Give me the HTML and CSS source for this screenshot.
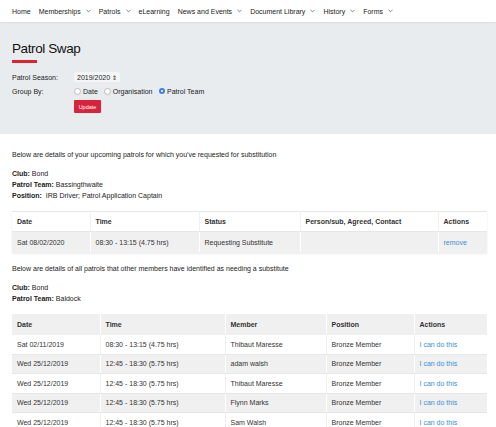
FILE: index.html
```html
<!DOCTYPE html>
<html lang="en">
<head>
  <meta charset="UTF-8">
  <meta name="viewport" content="width=device-width, initial-scale=1.0">
  <title>Patrol Swap</title>
  <link rel="stylesheet" href="styles.css">
</head>
<body>

<nav class="top-nav">
  <a href="#">Home</a>
  <a href="#">Memberships <svg class="chev" viewBox="0 0 6 4"><polyline points="0.5,0.5 3,3 5.5,0.5"/></svg></a>
  <a href="#">Patrols <svg class="chev" viewBox="0 0 6 4"><polyline points="0.5,0.5 3,3 5.5,0.5"/></svg></a>
  <a href="#">eLearning</a>
  <a href="#">News and Events <svg class="chev" viewBox="0 0 6 4"><polyline points="0.5,0.5 3,3 5.5,0.5"/></svg></a>
  <a href="#">Document Library <svg class="chev" viewBox="0 0 6 4"><polyline points="0.5,0.5 3,3 5.5,0.5"/></svg></a>
  <a href="#">History <svg class="chev" viewBox="0 0 6 4"><polyline points="0.5,0.5 3,3 5.5,0.5"/></svg></a>
  <a href="#">Forms <svg class="chev" viewBox="0 0 6 4"><polyline points="0.5,0.5 3,3 5.5,0.5"/></svg></a>
</nav>

<header class="page-head">
  <h1>Patrol Swap</h1>
  <div class="title-bar"></div>

  <form class="filter-form">
    <div class="form-row">
      <label>Patrol Season:</label>
      <span class="season-select">2019/2020 <span class="updown">&#8661;</span></span>
    </div>
    <div class="form-row">
      <label>Group By:</label>
      <span class="radio"></span><span class="radio-label">Date</span>
      <span class="radio"></span><span class="radio-label">Organisation</span>
      <span class="radio checked"></span><span class="radio-label">Patrol Team</span>
    </div>
    <div class="form-row">
      <label></label>
      <button type="button" class="update-btn">Update</button>
    </div>
  </form>
</header>

<main class="content">
  <p class="intro first">Below are details of your upcoming patrols for which you've requested for substitution</p>
  <div class="details">
    <div><b>Club:</b> Bond</div>
    <div><b>Patrol Team:</b> Bassingthwaite</div>
    <div><b>Position:</b>&nbsp; IRB Driver; Patrol Application Captain</div>
  </div>

  <table class="patrols mine">
    <colgroup>
      <col style="width:78px"><col style="width:109px"><col style="width:101px"><col style="width:138px"><col>
    </colgroup>
    <thead>
      <tr><th>Date</th><th>Time</th><th>Status</th><th>Person/sub, Agreed, Contact</th><th>Actions</th></tr>
    </thead>
    <tbody>
      <tr><td>Sat 08/02/2020</td><td>08:30 - 13:15 (4.75 hrs)</td><td>Requesting Substitute</td><td></td><td><a href="#">remove</a></td></tr>
    </tbody>
  </table>

  <p class="intro">Below are details of all patrols that other members have identified as needing a substitute</p>
  <div class="details">
    <div><b>Club:</b> Bond</div>
    <div><b>Patrol Team:</b> Baldock</div>
  </div>

  <table class="patrols others">
    <colgroup>
      <col style="width:88px"><col style="width:125px"><col style="width:101px"><col style="width:88px"><col>
    </colgroup>
    <thead>
      <tr><th>Date</th><th>Time</th><th>Member</th><th>Position</th><th>Actions</th></tr>
    </thead>
    <tbody>
      <tr><td>Sat 02/11/2019</td><td>08:30 - 13:15 (4.75 hrs)</td><td>Thibaut Maresse</td><td>Bronze Member</td><td><a href="#">I can do this</a></td></tr>
      <tr><td>Wed 25/12/2019</td><td>12:45 - 18:30 (5.75 hrs)</td><td>adam walsh</td><td>Bronze Member</td><td><a href="#">I can do this</a></td></tr>
      <tr><td>Wed 25/12/2019</td><td>12:45 - 18:30 (5.75 hrs)</td><td>Thibaut Maresse</td><td>Bronze Member</td><td><a href="#">I can do this</a></td></tr>
      <tr><td>Wed 25/12/2019</td><td>12:45 - 18:30 (5.75 hrs)</td><td>Flynn Marks</td><td>Bronze Member</td><td><a href="#">I can do this</a></td></tr>
      <tr><td>Wed 25/12/2019</td><td>12:45 - 18:30 (5.75 hrs)</td><td>Sam Walsh</td><td>Bronze Member</td><td><a href="#">I can do this</a></td></tr>
    </tbody>
  </table>
</main>

</body>
</html>
```

FILE: styles.css
```css
body {
  margin: 0;
  font-family: "Liberation Sans", Arial, sans-serif;
  font-size: 7px;
  color: #222;
  background: #fff;
}
.top-nav {
  height: 22px;
  display: flex;
  align-items: center;
  gap: 8px;
  padding: 0 12px;
  background: #fff;
  box-shadow: 0 1px 2px rgba(0,0,0,0.06);
  position: relative;
}
.top-nav a {
  color: #222;
  text-decoration: none;
  font-size: 7px;
  display: flex;
  align-items: center;
}
.chev {
  width: 5px;
  height: 4px;
  margin-left: 5px;
  fill: none;
  stroke: #444;
  stroke-width: 0.8;
}
.page-head {
  background: #e9ecef;
  padding: 19px 12px 21px;
}
.page-head h1 {
  margin: 0;
  font-size: 13.5px;
  line-height: 16px;
  font-weight: normal;
  letter-spacing: -0.4px;
  color: #111;
}
.title-bar {
  width: 25px;
  height: 3px;
  margin-top: 3px;
  background: #e0222f;
}
.filter-form {
  margin-top: 8px;
}
.form-row {
  display: flex;
  align-items: center;
  height: 12px;
  margin-bottom: 2px;
}
.form-row:last-child {
  height: 13px;
  margin-top: 3px;
  margin-bottom: 0;
}
.form-row label {
  width: 62px;
  color: #222;
}
.season-select {
  display: inline-flex;
  align-items: center;
  justify-content: space-between;
  width: 40px;
  height: 10px;
  padding: 0 3px;
  background: #f4f5f7;
  border-radius: 2px;
}
.updown {
  font-size: 6px;
}
.radio {
  width: 5px;
  height: 5px;
  border-radius: 50%;
  border: 0.6px solid #b8bcc2;
  background: #fff;
  margin-right: 2px;
}
.radio.checked {
  background: #fff;
  border: 2px solid #3b82e0;
  width: 2.5px;
  height: 2.5px;
}
.radio-label {
  margin-right: 6px;
}
.update-btn {
  width: 27px;
  height: 13px;
  padding: 0;
  border: none;
  background: #d8243a;
  color: #fff;
  font-family: "Liberation Sans", Arial, sans-serif;
  font-size: 5.5px;
  border-radius: 1px;
}
.content {
  padding: 0 9px 0 12px;
}
.intro {
  margin: 0;
  line-height: 11px;
  padding-top: 3px;
}
.intro.first {
  padding-top: 15px;
}
.details {
  margin-top: 8px;
  line-height: 11px;
  margin-bottom: 10px;
}
.details b {
  color: #222;
}
.patrols {
  width: 100%;
  border-collapse: collapse;
  table-layout: fixed;
  margin-bottom: 7px;
}
.patrols th {
  text-align: left;
  font-weight: bold;
  color: #333;
  padding: 0 5px;
}
.patrols td {
  padding: 0 5px;
  color: #333;
  white-space: nowrap;
}
.patrols th, .patrols td {
  border: 1px solid #e6e6e6;
  border-left-color: #f0f0f0;
  border-right-color: #f0f0f0;
}
.patrols th:first-child, .patrols td:first-child {
  border-left: none;
}
.patrols th:last-child, .patrols td:last-child {
  border-right: none;
}
.patrols a {
  color: #3b8fd8;
  text-decoration: none;
}
.mine {
  box-shadow: 0 1px 2px rgba(0,0,0,0.08);
}
.mine thead tr {
  height: 20px;
  background: #fff;
}
.mine tbody tr {
  height: 21px;
  background: #f0f0f0;
}
.mine tbody td {
  border-color: #f0f0f0;
  border-left-color: #fff;
  border-right-color: #fff;
}
.others {
  margin-top: 1px;
}
.others thead tr {
  height: 20px;
  background: #f0f0f0;
}
.others thead th {
  border-color: #f0f0f0;
  border-left-color: #fff;
  border-right-color: #fff;
}
.others tbody tr {
  height: 19.5px;
  background: #fff;
}
.others tbody tr:nth-child(even) {
  background: #f0f0f0;
}
.others tbody tr:nth-child(even) td {
  border-left-color: #fff;
  border-right-color: #fff;
}
```
